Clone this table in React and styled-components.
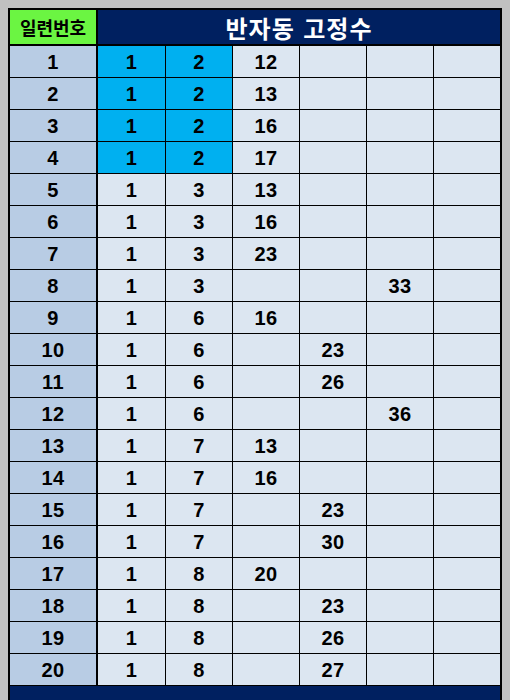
import React from 'react';
import styled, { createGlobalStyle } from 'styled-components';

const rows = [
  [1, 2, 12, null, null, null],
  [1, 2, 13, null, null, null],
  [1, 2, 16, null, null, null],
  [1, 2, 17, null, null, null],
  [1, 3, 13, null, null, null],
  [1, 3, 16, null, null, null],
  [1, 3, 23, null, null, null],
  [1, 3, null, null, 33, null],
  [1, 6, 16, null, null, null],
  [1, 6, null, 23, null, null],
  [1, 6, null, 26, null, null],
  [1, 6, null, null, 36, null],
  [1, 7, 13, null, null, null],
  [1, 7, 16, null, null, null],
  [1, 7, null, 23, null, null],
  [1, 7, null, 30, null, null],
  [1, 8, 20, null, null, null],
  [1, 8, null, 23, null, null],
  [1, 8, null, 26, null, null],
  [1, 8, null, 27, null, null],
];

const GlobalStyle = createGlobalStyle`
  html, body {
    margin: 0;
    padding: 0;
    background: #c0c0c0;
    height: 700px;
    overflow: hidden;
  }
`;

const App = () => (
  <>
    <GlobalStyle />
    <Page>
      <Sheet>
        <NoHeader>일련번호</NoHeader>
        <TitleHeader>반자동 고정수</TitleHeader>
        {rows.map((row, i) => (
          <React.Fragment key={i}>
            <NoCell>{i + 1}</NoCell>
            {row.map((v, j) => (
              <Cell key={j} $fixed={i < 4 && j < 2}>
                {v}
              </Cell>
            ))}
          </React.Fragment>
        ))}
        <Footer />
      </Sheet>
    </Page>
  </>
);

const Page = styled.div`
  padding: 8px 0 0 8px;
`;

const Sheet = styled.div`
  width: 490px;
  display: grid;
  grid-template-columns: 87px 67px repeat(5, 66px);
  grid-template-rows: 35px repeat(20, 31px) 20px;
  gap: 1px;
  background: #000;
  border: 2px solid #000;
  border-bottom: none;
`;

const NoHeader = styled.div`
  background: #6bf542;
  border-right: 1px solid #000;
  border-bottom: 1px solid #000;
  display: flex;
  align-items: center;
  justify-content: center;
  font-family: "Noto Sans CJK KR", sans-serif;
  font-weight: 700;
  font-size: 18px;
  color: #000;
`;

const TitleHeader = styled.div`
  grid-column: 2 / span 6;
  background: #002060;
  border-bottom: 1px solid #000;
  display: flex;
  align-items: center;
  justify-content: center;
  font-family: "Noto Sans CJK KR", sans-serif;
  font-weight: 700;
  font-size: 24px;
  letter-spacing: 1px;
  word-spacing: 2px;
  color: #fff;
`;

const Cell = styled.div`
  background: ${(p) => (p.$fixed ? '#00b0f0' : '#dce6f1')};
  display: flex;
  align-items: center;
  justify-content: center;
  padding-top: 1px;
  font-family: "Liberation Sans", Arial, sans-serif;
  font-weight: 700;
  font-size: 20px;
  letter-spacing: 0.5px;
  color: #000;
`;

const NoCell = styled(Cell)`
  background: #b8cce4;
  border-right: 1px solid #000;
`;

const Footer = styled.div`
  grid-column: 1 / -1;
  background: #002060;
`;

export default App;
